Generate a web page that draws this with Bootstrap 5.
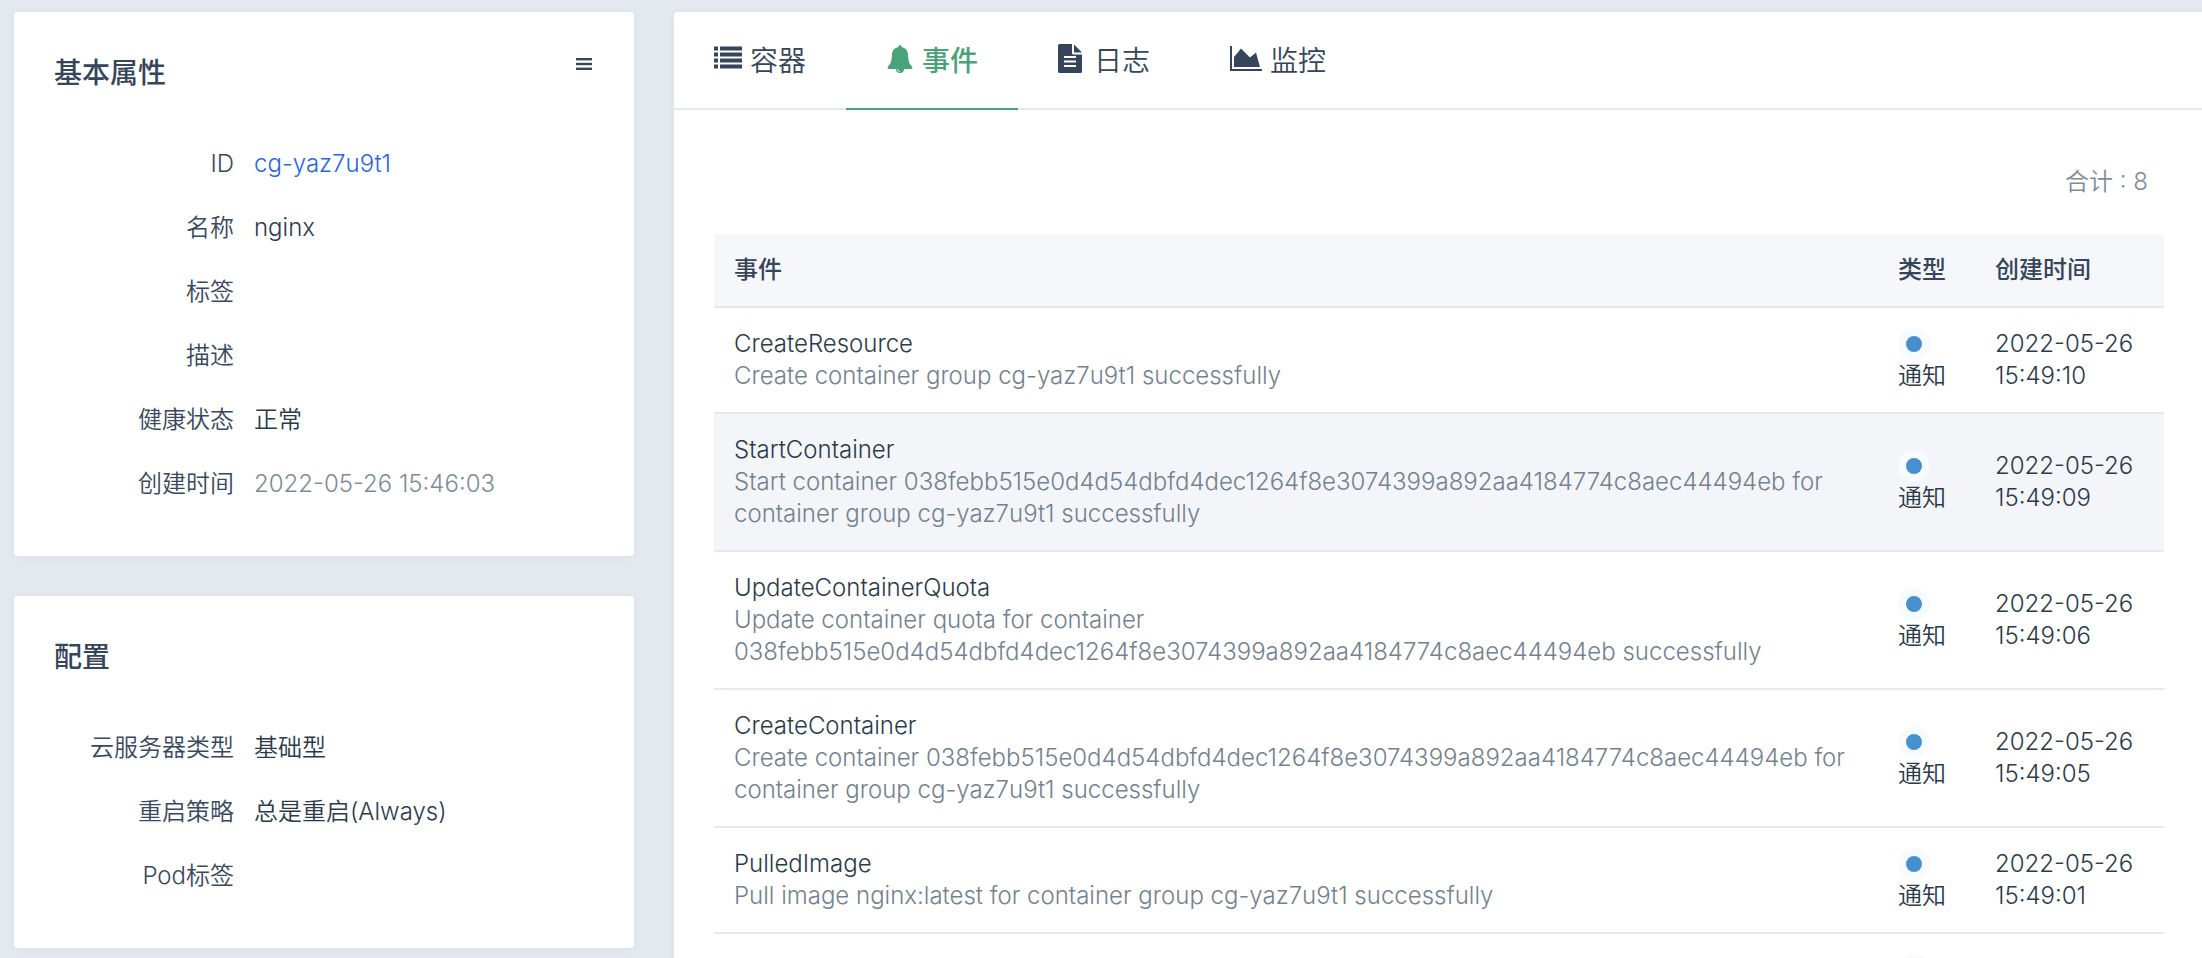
<!DOCTYPE html>
<html lang="zh-CN">
<head>
<meta charset="utf-8">
<meta name="viewport" content="width=device-width, initial-scale=1">
<title>nginx</title>
<link rel="stylesheet" href="https://cdn.jsdelivr.net/npm/bootstrap@5.3.0/dist/css/bootstrap.min.css">
<style>
  :root { --ink: #364559; --ink-dark: #2c3a4a; --muted: #7e8b99; --line: #e3e9ef; --green: #4aa378; }
  body { background: #e4e9f0; color: var(--ink-dark); font: 350 24px/32px Inter, "Noto Sans CJK SC", sans-serif; }
  .page { padding: 12px 0 0 14px; gap: 40px; }
  .sidebar { width: 620px; gap: 40px; }
  .panel { background: #fff; border: 0; border-radius: 4px; box-shadow: 0 2px 8px rgba(60, 80, 140, .06); }
  .side-panel { padding: 40px; }
  .main-panel { border-radius: 4px 0 0 0; }
  .panel-head { height: 40px; margin-bottom: 40px; }
  .panel-head h2 { font-size: 28px; line-height: 42px; font-weight: 500; color: var(--ink); }
  .menu-btn { line-height: 0; padding: 6px 2px; color: var(--ink); }
  .props { display: grid; grid-template-columns: 180px 1fr; column-gap: 20px; }
  .props dt, .props dd { margin: 0; padding: 16px 0; min-height: 64px; font-weight: 350; }
  .props dt { text-align: right; color: #3a485c; }
  .props a { color: #2b66d9; }
  .soft { color: var(--muted); }
  .events .soft { font-weight: 300; color: #74818f; }
  .tabs { border-bottom: 2px solid var(--line); }
  .tabs .nav-link { display: flex; gap: 8px; height: 98px; margin-bottom: -2px; padding: 28px 40px; border-bottom: 2px solid transparent; font-size: 28px; line-height: 42px; color: var(--ink); }
  .tabs .nav-link.active { color: var(--green); border-color: var(--green); font-weight: 500; }
  .tab-body { padding: 56px 38px 0 40px; }
  .total { margin-bottom: 36px; padding-right: 16px; }
  .events { table-layout: fixed; border-collapse: separate; border-spacing: 0; width: 100%; }
  .events th, .events td { padding: 20px; border-bottom: 2px solid var(--line); vertical-align: middle; }
  .events th { background: #f5f7fb; color: var(--ink); font-weight: 500; }
  .events .hovered td { background: #f3f5f9; }
  .col-type { width: 97px; }
  .col-time { width: 189px; }
  .events td:first-child { padding-right: 8px; }
  .events .kind { padding-right: 0; }
  .dot { width: 32px; height: 32px; border: 8px solid #f6fbff; border-radius: 50%; background: #4790cf; }
</style>
</head>
<body class="vh-100 overflow-hidden">
<div class="page d-flex align-items-start">
  <aside class="sidebar d-flex flex-column flex-shrink-0">
    <section class="panel side-panel">
      <div class="panel-head d-flex justify-content-between align-items-start">
        <h2 class="m-0">基本属性</h2>
        <button class="menu-btn btn border-0" type="button" aria-label="菜单">
          <svg width="16" height="12" viewBox="0 0 16 12" fill="currentColor"><rect width="16" height="2.400"/><rect y="4.800" width="16" height="2.400"/><rect y="9.600" width="16" height="2.400"/></svg>
        </button>
      </div>
      <dl class="props m-0">
        <dt>ID</dt><dd><a class="text-decoration-none" href="#">cg-yaz7u9t1</a></dd>
        <dt>名称</dt><dd>nginx</dd>
        <dt>标签</dt><dd></dd>
        <dt>描述</dt><dd></dd>
        <dt>健康状态</dt><dd>正常</dd>
        <dt>创建时间</dt><dd class="soft">2022-05-26 15:46:03</dd>
      </dl>
    </section>
    <section class="panel side-panel">
      <div class="panel-head"><h2 class="m-0">配置</h2></div>
      <dl class="props m-0">
        <dt>云服务器类型</dt><dd>基础型</dd>
        <dt>重启策略</dt><dd>总是重启(Always)</dd>
        <dt>Pod标签</dt><dd></dd>
      </dl>
    </section>
  </aside>

  <main class="panel main-panel flex-grow-1">
    <nav class="tabs nav">
      <a class="nav-link" href="#">
        <svg width="28" height="36" viewBox="0 0 28 36" fill="currentColor"><path d="M0 6.500h4v4H0zM6 6.500h22v4H6zM0 12.500h4v4H0zM6 12.500h22v4H6zM0 18.500h4v4H0zM6 18.500h22v4H6zM0 24.500h4v4H0zM6 24.500h22v4H6z"/></svg>容器</a>
      <a class="nav-link active" href="#" aria-current="page">
        <svg width="28" height="36" viewBox="0 0 28 36" fill="currentColor"><path d="M14 5c1 0 1.600.8 1.600 2 3.800.8 6.200 3.600 6.400 7.500.3 6.500 1.200 9.500 4 12 .8.8.5 2.500-.8 2.500h-7.200c0 2.500-1.200 4-4 4s-4-1.500-4-4H2.800c-1.300 0-1.600-1.700-.8-2.500 2.800-2.500 3.700-5.500 4-12 .2-3.900 2.600-6.700 6.400-7.500 0-1.200.6-2 1.600-2z"/><path d="M11.500 29c.2 1.500 1 2.500 2.500 2.800" fill="none" stroke="#fff" stroke-width=".8"/></svg>事件</a>
      <a class="nav-link" href="#">
        <svg width="28" height="36" viewBox="0 0 28 36" fill="currentColor"><path fill-rule="evenodd" d="M1.500 4H14v9q0 1.500 1.500 1.500H24v17q0 1.500-1.500 1.500h-21Q0 33 0 31.500v-26Q0 4 1.500 4zM6 16v2h12v-2zm0 4.500v2h12v-2zm0 4.500v2h12v-2z"/><path d="M16 4.500l8 8h-8z"/></svg>日志</a>
      <a class="nav-link" href="#">
        <svg width="32" height="36" viewBox="0 0 32 36" fill="currentColor"><path d="M0 6h2v23h30v2H0zM4 17l7-8.500 9 9 6-5L30 27H4z"/></svg>监控</a>
    </nav>
    <div class="tab-body">
      <div class="total soft text-end">合计 : 8</div>
      <table class="events">
        <colgroup><col><col class="col-type"><col class="col-time"></colgroup>
        <thead><tr><th>事件</th><th class="kind">类型</th><th>创建时间</th></tr></thead>
        <tbody>
          <tr><td>CreateResource<div class="soft">Create container group cg-yaz7u9t1 successfully</div></td><td class="kind"><div class="dot"></div>通知</td><td>2022-05-26 15:49:10</td></tr>
          <tr class="hovered"><td>StartContainer<div class="soft">Start container 038febb515e0d4d54dbfd4dec1264f8e3074399a892aa4184774c8aec44494eb for container group cg-yaz7u9t1 successfully</div></td><td class="kind"><div class="dot"></div>通知</td><td>2022-05-26 15:49:09</td></tr>
          <tr><td>UpdateContainerQuota<div class="soft">Update container quota for container 038febb515e0d4d54dbfd4dec1264f8e3074399a892aa4184774c8aec44494eb successfully</div></td><td class="kind"><div class="dot"></div>通知</td><td>2022-05-26 15:49:06</td></tr>
          <tr><td>CreateContainer<div class="soft">Create container 038febb515e0d4d54dbfd4dec1264f8e3074399a892aa4184774c8aec44494eb for container group cg-yaz7u9t1 successfully</div></td><td class="kind"><div class="dot"></div>通知</td><td>2022-05-26 15:49:05</td></tr>
          <tr><td>PulledImage<div class="soft">Pull image nginx:latest for container group cg-yaz7u9t1 successfully</div></td><td class="kind"><div class="dot"></div>通知</td><td>2022-05-26 15:49:01</td></tr>
          <tr><td></td><td class="kind"><div class="dot"></div></td><td></td></tr>
        </tbody>
      </table>
    </div>
  </main>
</div>
<script src="https://cdn.jsdelivr.net/npm/bootstrap@5.3.0/dist/js/bootstrap.bundle.min.js"></script>
</body>
</html>
